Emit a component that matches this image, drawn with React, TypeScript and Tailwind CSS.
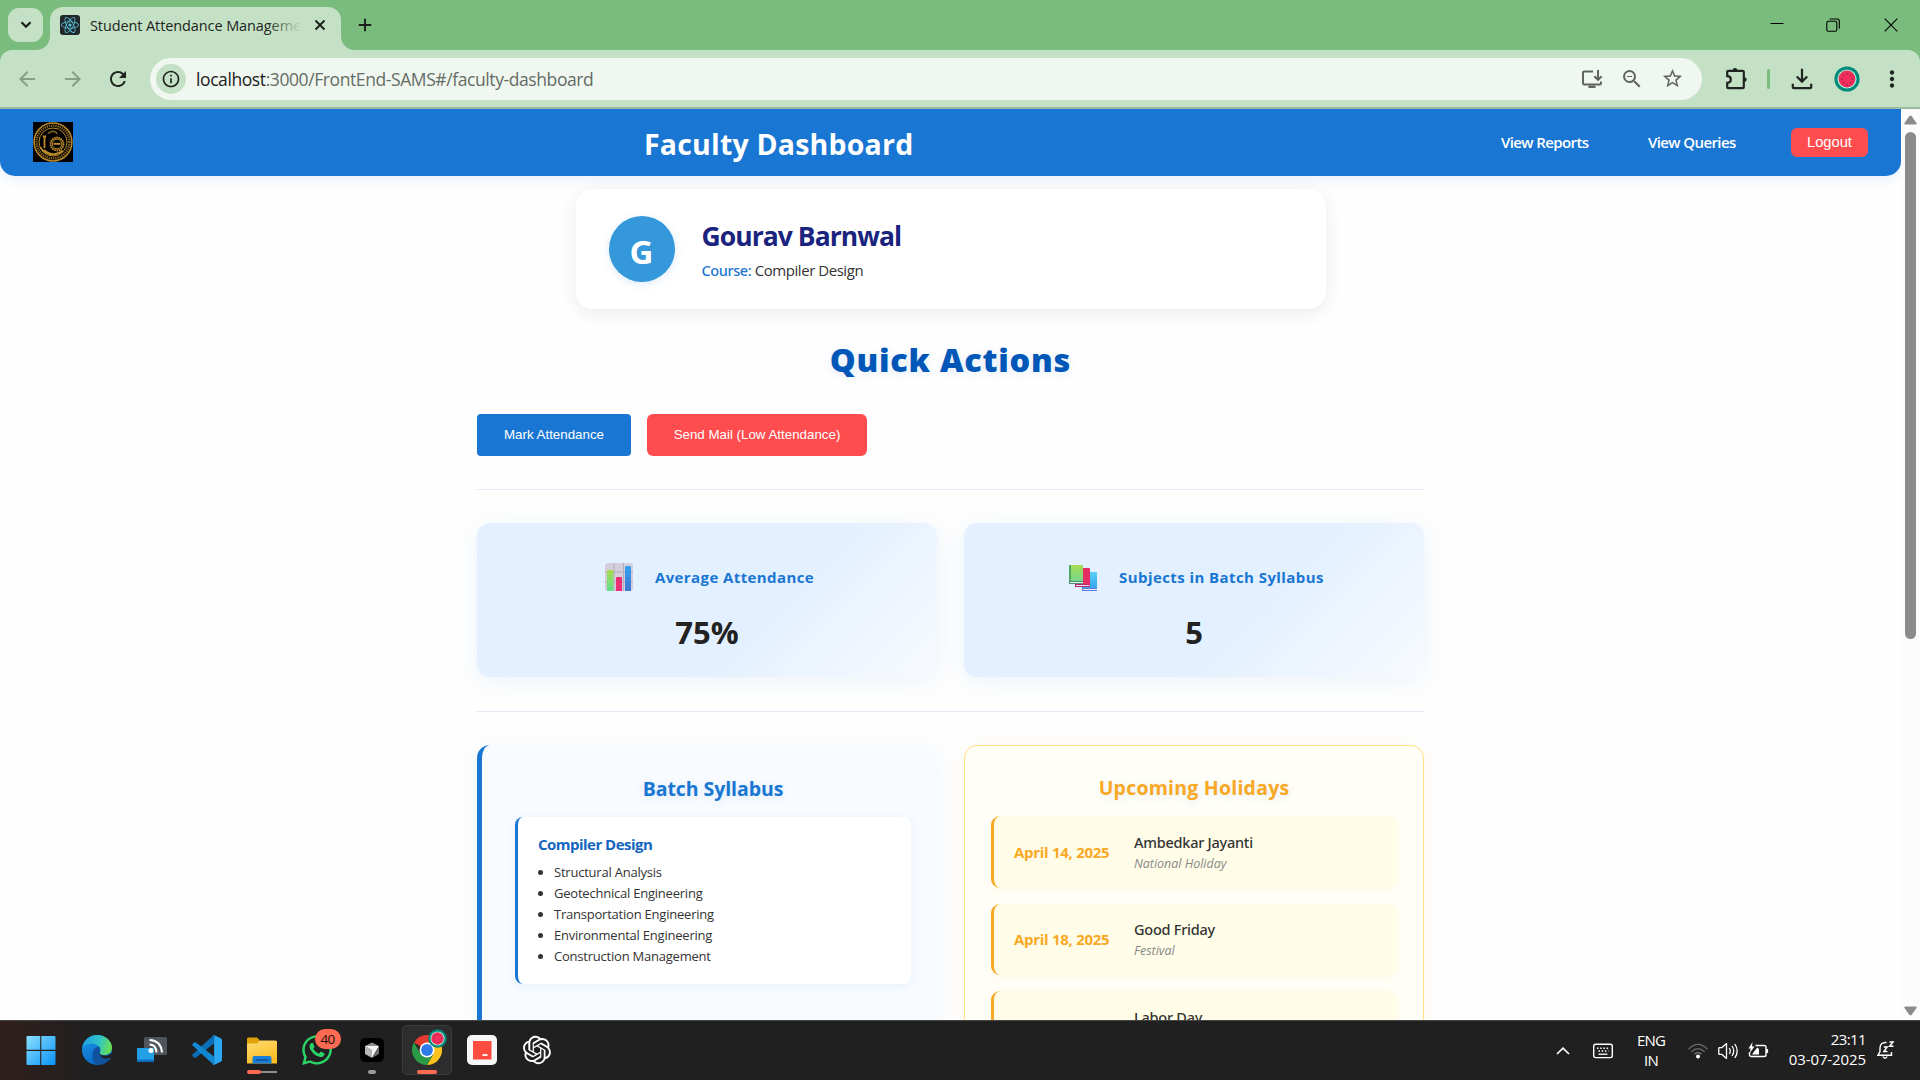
import React from "react";
import { FaReact, FaWhatsapp } from "react-icons/fa";
import {
  MdArrowBack,
  MdArrowForward,
  MdRefresh,
  MdInfoOutline,
  MdZoomOut,
  MdStarOutline,
  MdMoreVert,
} from "react-icons/md";
import { RiOpenaiFill } from "react-icons/ri";

/* ---------- Browser chrome ---------- */

function Melon({ className }: { className: string }) {
  return (
    <svg viewBox="0 0 26 26" className={className}>
      <circle cx="13" cy="13" r="12.6" fill="#00897b" />
      <circle cx="13" cy="13" r="9.6" fill="#a7f0d8" />
      <circle cx="13" cy="13" r="8.4" fill="#f22e5c" />
      <g fill="#5c1330">
        <circle cx="13" cy="7.5" r=".6" />
        <circle cx="13" cy="18.5" r=".6" />
        <circle cx="7.5" cy="13" r=".6" />
        <circle cx="18.5" cy="13" r=".6" />
        <circle cx="9.3" cy="9.3" r=".6" />
        <circle cx="16.7" cy="9.3" r=".6" />
        <circle cx="9.3" cy="16.7" r=".6" />
        <circle cx="16.7" cy="16.7" r=".6" />
      </g>
    </svg>
  );
}

function TabStrip() {
  return (
    <div className="flex h-[50px] items-end bg-[#7abc7d]">
      <div className="mb-2 ml-2 flex h-[34px] w-[35px] shrink-0 items-center justify-center rounded-[11px] bg-[#c5e1c5]">
        <svg viewBox="0 0 12 8" className="h-[8px] w-[12px]" fill="none" stroke="#1b1f1b" strokeWidth="2.2">
          <path d="M1.5 1.2 6 5.8l4.500-4.600" />
        </svg>
      </div>
      <svg viewBox="0 0 14 14" className="-ml-[7px] h-[14px] w-[14px] shrink-0" fill="#c5e1c5">
        <path d="M14 0v14H0C8 14 14 8 14 0Z" />
      </svg>
      <div className="flex h-[43px] w-[291px] shrink-0 items-center rounded-t-[13px] bg-[#c5e1c5] pl-[10px]">
        <div className="mt-[-8px] flex h-5 w-5 items-center justify-center rounded-[3px] bg-[#22272b]">
          <FaReact className="h-[18px] w-[18px] text-[#58c4dc]" />
        </div>
        <div className="relative mt-[-6px] ml-[10px] h-[24px] w-[211px] overflow-hidden text-[14.5px] leading-6 tracking-[-0.1px] whitespace-nowrap text-[#1d241d]">
          Student Attendance Management
          <div className="absolute top-0 right-0 h-full w-[34px] bg-linear-to-r from-[#c5e1c500] to-[#c5e1c5]" />
        </div>
        <svg viewBox="0 0 12 12" className="mt-[-7px] ml-[13px] h-3 w-3" stroke="#1b1f1b" strokeWidth="1.9">
          <path d="M1.500 1.500l9 9M10.500 1.500l-9 9" />
        </svg>
      </div>
      <svg viewBox="0 0 14 14" className="h-[14px] w-[14px] shrink-0" fill="#c5e1c5">
        <path d="M0 0v14h14C6 14 0 8 0 0Z" />
      </svg>
      <svg viewBox="0 0 14 14" className="mb-[18px] ml-[3px] h-[14px] w-[14px] shrink-0" stroke="#1b1f1b" strokeWidth="1.9">
        <path d="M7 .8v12.400M.8 7h12.400" />
      </svg>
      <div className="ml-auto flex h-full w-[154px] shrink-0 items-center pl-[4px] text-black">
        <svg viewBox="0 0 14 14" className="h-[14px] w-[14px]" fill="none" stroke="currentColor">
          <path d="M.5 5.500h13" />
        </svg>
        <svg viewBox="0 0 14 14" className="ml-[42px] h-[14px] w-[14px]" fill="none" stroke="currentColor" strokeWidth="1.100">
          <rect x=".8" y="3.200" width="10" height="10" rx="1.500" />
          <path d="M3.500 1h7.500q2.300 0 2.300 2.300v7.500" />
        </svg>
        <svg viewBox="0 0 14 14" className="ml-[44px] h-[14px] w-[14px]" fill="none" stroke="currentColor" strokeWidth="1.100">
          <path d="M.7.7l12.600 12.600M13.300.7.7 13.300" />
        </svg>
      </div>
    </div>
  );
}

function Toolbar() {
  return (
    <div className="h-[59px] bg-[#7abc7d]">
      <div className="flex h-full items-center rounded-t-[12px] border-b-2 border-[#9fb8a1] bg-[#c5e1c5] text-[#1f2420]">
        <MdArrowBack className="ml-[15px] h-6 w-6 text-[#84a085]" />
        <MdArrowForward className="ml-[22px] h-6 w-6 text-[#84a085]" />
        <MdRefresh className="ml-[21px] h-6 w-6" />
        <div className="ml-[20px] flex h-[42px] w-[1552px] items-center rounded-full bg-[#f0f7f0] pl-[6px] text-[#5f6460]">
          <div className="flex h-[30px] w-[30px] items-center justify-center rounded-full bg-[#c5e1c5]">
            <MdInfoOutline className="h-5 w-5 text-[#1f2420]" />
          </div>
          <div className="ml-[10px] h-6 w-[420px] text-[17.5px] leading-6 tracking-[-0.41px] whitespace-nowrap text-[#646c66]">
            <span className="text-[#1c211d]">localhost</span>:3000/FrontEnd-SAMS#/faculty-dashboard
          </div>
          <svg viewBox="0 0 22 18" className="ml-auto h-[18px] w-[22px]" fill="none" stroke="currentColor" strokeWidth="2">
            <path d="M12 1.500H3.200Q2 1.500 2 2.700v10.600q0 1.200 1.200 1.200h15.600q1.200 0 1.200-1.200V11.500" />
            <path d="M17 0v9.500M13.300 6.200 17 9.800l3.700-3.600" />
            <path d="M7.500 16.800h7" strokeWidth="2.400" />
          </svg>
          <MdZoomOut className="ml-[17px] h-[24px] w-[24px]" />
          <MdStarOutline className="ml-[17px] h-[23px] w-[23px]" />
          <div className="w-[18px]" />
        </div>
        <svg viewBox="0 0 24 24" className="ml-[22px] h-6 w-6" fill="none" stroke="currentColor" strokeWidth="2.200">
          <path d="M4.200 3.800h14.600q1 0 1 1v15.400q0 1-1 1H4.200q-1 0-1-1v-4.400c2.600 0 3.600-1.500 3.600-3.300S5.800 9.200 3.200 9.200V4.800q0-1 1-1Z" />
          <path d="M8.600 3.600a2.400 2.600 0 0 1 4.800 0ZM20 10.200a2.600 2.400 0 0 1 0 4.800Z" fill="currentColor" stroke="none" />
        </svg>
        <div className="ml-[19px] h-[20px] w-[3px] rounded-full bg-[#7abc7d]" />
        <svg viewBox="0 0 22 22" className="ml-[21px] h-[22px] w-[22px]" fill="none" stroke="currentColor" strokeWidth="2.200">
          <path d="M11 .8v12.400M5.800 8.500 11 13.600l5.200-5.100" />
          <path d="M1.800 15.800v3.400q0 1 1 1h16.400q1 0 1-1v-3.400" />
        </svg>
        <Melon className="ml-[21px] h-[26px] w-[26px]" />
        <MdMoreVert className="ml-[19px] h-[26px] w-[26px]" />
      </div>
    </div>
  );
}

/* ---------- Page content ---------- */

function Logo() {
  return (
    <svg viewBox="0 0 40 40" className="-mt-px h-10 w-10 bg-black" fill="none" stroke="#b98a2b">
      <circle cx="20" cy="20" r="18.900" strokeWidth="1.500" />
      <circle cx="20" cy="20" r="16.400" strokeWidth="2.400" strokeDasharray="1.300 .9" opacity=".75" />
      <circle cx="20" cy="20" r="14" strokeWidth="1" />
      <circle cx="24" cy="22" r="6.400" strokeWidth="2" strokeDasharray="1.600 .6" />
      <circle cx="24" cy="22" r="4.800" strokeWidth="1" />
      <path d="M20.500 21.800h7" strokeWidth="2" />
      <path d="M11.500 14v12M9.800 14.500h3.400" strokeWidth="1.800" />
      <path d="M7.500 25c3 8 15 10 22 3.500M11 28c5 5 13 5.500 18.500 1" strokeWidth="1.800" />
      <path d="M15 11.500q5-4.500 9.500 0" strokeWidth="2" opacity=".6" />
    </svg>
  );
}

function Header() {
  return (
    <header className="flex h-[67px] shrink-0 items-center rounded-b-[15px] bg-[#1976d2] pr-[33px] pl-[33px] text-white shadow-[0_2px_14px_rgba(25,118,210,0.12)]">
      <Logo />
      <h1 className="mt-[3px] ml-[571px] text-[28.5px] leading-10 font-bold tracking-[0.2px] whitespace-nowrap">
        Faculty Dashboard
      </h1>
      <nav className="mt-[-1px] ml-auto flex items-center text-[15px] leading-6 font-semibold tracking-[-0.6px] whitespace-nowrap">
        <a className="w-[147px]">View Reports</a>
        <a className="w-[143px]">View Queries</a>
      </nav>
      <button className="flex h-[29px] w-[77px] items-center justify-center rounded-[6px] bg-[#ff4d4f] font-['Liberation_Sans'] text-[14.7px]">
        Logout
      </button>
    </header>
  );
}

function ProfileCard() {
  return (
    <section className="mt-[13px] flex h-[120px] w-[750px] shrink-0 items-center self-center rounded-[17px] bg-white pl-[33px] shadow-[0_4px_18px_rgba(0,0,0,0.08)]">
      <div className="flex h-[66px] w-[66px] items-center justify-center rounded-full bg-[#3498db] pt-1 text-[33px] leading-none font-bold text-white shadow-[0_2px_8px_rgba(25,118,210,0.15)]">
        G
      </div>
      <div className="mt-[7px] ml-[27px] whitespace-nowrap">
        <h2 className="text-[26.500px] leading-[34px] font-bold tracking-[-0.95px] text-[#1a237e]">Gourav Barnwal</h2>
        <p className="text-[15px] leading-[34px] tracking-[-0.45px] text-[#333]">
          <span className="font-['Noto_Sans'] text-[14.5px] font-medium tracking-[-0.4px] text-[#1976d2]">Course:</span> Compiler Design
        </p>
      </div>
    </section>
  );
}

function ChartIcon() {
  return (
    <svg viewBox="0 0 28 28" className="h-7 w-7">
      <defs>
        <linearGradient id="cg" x1="0" y1="0" x2="0" y2="1">
          <stop offset="0" stopColor="#a8dc4e" />
          <stop offset="1" stopColor="#5fe08f" />
        </linearGradient>
        <linearGradient id="cb" x1="0" y1="0" x2="0" y2="1">
          <stop offset="0" stopColor="#35a2f4" />
          <stop offset="1" stopColor="#3f78cf" />
        </linearGradient>
      </defs>
      <rect width="28" height="28" rx="3" fill="#d5cfdd" />
      <path d="M9 0v28M18.500 0v28M0 9h28M0 19h28" stroke="#b3aabd" />
      <path d="M2 8q0-1 1-1h4.500q1 0 1 1v20H2Z" fill="url(#cg)" />
      <path d="M11 15q0-1 1-1h4q1 0 1 1v13h-6Z" fill="#ea2f74" />
      <path d="M20 4q0-1 1-1h4q1 0 1 1v24h-6Z" fill="url(#cb)" />
    </svg>
  );
}

function BooksIcon() {
  return (
    <svg viewBox="0 0 28 28" className="h-7 w-7">
      <defs>
        <linearGradient id="bg1" x1="0" y1="0" x2="0" y2="1">
          <stop offset="0" stopColor="#a6dd52" />
          <stop offset="1" stopColor="#6fd598" />
        </linearGradient>
        <linearGradient id="bg2" x1="0" y1="0" x2="0" y2="1">
          <stop offset="0" stopColor="#5ad0f6" />
          <stop offset="1" stopColor="#2f9df0" />
        </linearGradient>
      </defs>
      <rect x="13" y="9" width="15" height="19" rx="1" fill="url(#bg2)" />
      <path d="M13 25h15v3H13Z" fill="#5b7fdb" />
      <path d="M14 26.500h14" stroke="#e8e4f5" />
      <rect x="6" y="5" width="15" height="19" rx="1" fill="#e52e63" />
      <path d="M6 21h14v3H6Z" fill="#b02a6a" />
      <path d="M7 22.500h13" stroke="#f5e4f0" />
      <rect x="0" y="2" width="14" height="19" rx="1" fill="url(#bg1)" />
      <path d="M0 2h2v19H0Z" fill="#4ea860" />
      <path d="M0 18h14v3H0Z" fill="#4b8d72" />
      <path d="M1 19.500h13" stroke="#efeaf5" />
    </svg>
  );
}

function StatCard({ icon, label, value, labelClass }: { icon: React.ReactNode; label: string; value: string; labelClass: string }) {
  return (
    <div className="flex h-[154px] flex-col items-center rounded-[13px] bg-[linear-gradient(135deg,#e3f0ff_60%,#f8faff_100%)] pt-[39px] shadow-[0_4px_24px_rgba(25,118,210,0.08)]">
      <div className="ml-[5px] flex h-[29px] items-center gap-[22px]">
        {icon}
        <div className={"text-[15px] leading-6 font-bold whitespace-nowrap text-[#1976d2] " + labelClass}>{label}</div>
      </div>
      <div className="mt-[21px] text-[31px] leading-10 font-bold text-[#222]">{value}</div>
    </div>
  );
}

const topics = [
  "Structural Analysis",
  "Geotechnical Engineering",
  "Transportation Engineering",
  "Environmental Engineering",
  "Construction Management",
];

function Syllabus() {
  return (
    <section className="h-[400px] rounded-[13px] border-l-[5px] border-[#1976d2] bg-[#f8fbff] pr-[26px] pl-[33px] shadow-[0_4px_22px_rgba(25,118,210,0.06)]">
      <h3 className="mt-[28px] text-center text-[19.500px] leading-8 font-bold tracking-[-0.08px] text-[#1976d2] [text-shadow:0_2px_8px_rgba(25,118,210,0.12)]">
        Batch Syllabus
      </h3>
      <div className="mt-[12px] h-[167px] rounded-[8px] border-l-[3px] border-[#1976d2] bg-white pt-[15px] pl-[20px] shadow-[0_2px_8px_rgba(25,118,210,0.08)]">
        <h4 className="text-[15px] leading-6 font-bold tracking-[-0.52px] text-[#1565c0]">Compiler Design</h4>
        <ul className="mt-[6px]">
          {topics.map((t) => (
            <li key={t} className="flex h-[21px] items-center text-[13px] tracking-[-0.22px] text-[#333]">
              <span className="mr-[11px] h-[5px] w-[5px] rounded-full bg-[#333]" />
              {t}
            </li>
          ))}
        </ul>
      </div>
    </section>
  );
}

const holidays = [
  { date: "April 14, 2025", name: "Ambedkar Jayanti", kind: "National Holiday" },
  { date: "April 18, 2025", name: "Good Friday", kind: "Festival" },
  { date: "May 1, 2025", name: "Labor Day", kind: "National Holiday" },
];

function Holidays() {
  return (
    <section className="h-[400px] rounded-[13px] border border-[#ffe082] bg-[#fffef7] px-[26px] shadow-[0_4px_20px_rgba(249,168,37,0.08)]">
      <h3 className="mt-[26px] text-center text-[19.500px] leading-8 font-bold tracking-[0.22px] text-[#f9a825] [text-shadow:0_2px_8px_rgba(25,118,210,0.12)]">
        Upcoming Holidays
      </h3>
      <div className="mt-[12px] flex flex-col gap-4">
        {holidays.map((h) => (
          <div
            key={h.date}
            className="flex h-[71.500px] items-center rounded-[9px] border-l-[3px] border-[#f9a825] bg-[#fffde7] pl-[20px] whitespace-nowrap shadow-[0_2px_8px_rgba(249,168,37,0.07)]"
          >
            <div className="w-[120px] text-[15px] font-bold tracking-[-0.28px] text-[#f9a825]">{h.date}</div>
            <div className="mt-[2px]">
              <div className="font-['Noto_Sans'] text-[14.500px] leading-[21px] font-medium tracking-[-0.25px] text-[#333]">{h.name}</div>
              <div className="text-[12.500px] leading-[21px] tracking-[-0.02px] text-[#888] italic">{h.kind}</div>
            </div>
          </div>
        ))}
      </div>
    </section>
  );
}

function Page() {
  return (
    <div className="flex h-[911px] overflow-hidden bg-[#fefefe]">
      <div className="flex min-w-0 flex-1 flex-col">
        <Header />
        <ProfileCard />
        <main className="flex w-[947px] shrink-0 flex-col self-center">
          <h2 className="mt-[26px] h-[50px] text-center text-[32.500px] leading-[50px] font-extrabold tracking-[0.75px] text-[#0057b8] [text-shadow:0_2px_8px_rgba(25,118,210,0.12)]">
            Quick Actions
          </h2>
          <div className="mt-[29px] flex h-[42px] gap-4 font-['Liberation_Sans'] text-[13.33px] text-white">
            <button className="w-[154px] rounded-[4px] bg-[#1976d2]">Mark Attendance</button>
            <button className="w-[220px] rounded-[6px] bg-[#ff4d4f]">Send Mail (Low Attendance)</button>
          </div>
          <hr className="mt-[33px] border-[#e3e8f4]" />
          <div className="mt-[33px] grid grid-cols-2 gap-[27px]">
            <StatCard icon={<ChartIcon />} label="Average Attendance" value="75%" labelClass="tracking-[0.4px]" />
            <StatCard icon={<BooksIcon />} label="Subjects in Batch Syllabus" value="5" labelClass="tracking-[0.42px]" />
          </div>
          <hr className="mt-[34px] border-[#e3e8f4]" />
          <div className="mt-[33px] grid grid-cols-2 gap-[27px]">
            <Syllabus />
            <Holidays />
          </div>
        </main>
      </div>
      <div className="flex h-full w-[19px] flex-col items-center bg-[#fcfcfc] text-[#8b8b8b]">
        <svg viewBox="0 0 13 10" className="mt-[6px] h-[10px] w-[13px]" fill="currentColor">
          <path d="M5.300 1.200q1.200-1.600 2.400 0L12.500 8q.6 1.500-.8 1.500H1.300Q-.1 9.500.5 8Z" />
        </svg>
        <div className="mt-[7px] h-[507px] w-[11px] rounded-full bg-[#8b8b8b]" />
        <svg viewBox="0 0 13 10" className="mt-auto mb-[4px] h-[10px] w-[13px] rotate-180" fill="currentColor">
          <path d="M5.300 1.200q1.200-1.600 2.400 0L12.500 8q.6 1.500-.8 1.500H1.300Q-.1 9.500.5 8Z" />
        </svg>
      </div>
    </div>
  );
}

/* ---------- Taskbar ---------- */

function AppCell({ children, indicator }: { children: React.ReactNode; indicator?: React.ReactNode }) {
  return (
    <div className="flex h-full w-[55px] flex-col items-center pt-[14px]">
      <div className="relative h-[30px] w-[30px]">{children}</div>
      <div className="mt-[5px] flex h-1">{indicator}</div>
    </div>
  );
}

function TaskApps() {
  return (
    <div className="flex h-full pl-[14px]">
      <AppCell>
        <svg viewBox="0 0 30 30" className="-ml-px h-[30px] w-[30px]">
          <defs>
            <linearGradient id="win" x1="0" y1="0" x2="1" y2="1">
              <stop offset="0" stopColor="#8be0ff" />
              <stop offset="1" stopColor="#0a92f5" />
            </linearGradient>
          </defs>
          <path d="M.5 2q0-1 1-1h12.700v13.800H.5ZM15.300 1H28.500q1 0 1 1v12.800H15.300ZM.5 15.900h13.700v14H1.500q-1 0-1-1ZM15.300 15.900h14.200v13q0 1-1 1H15.300Z" fill="url(#win)" />
        </svg>
      </AppCell>
      <AppCell>
        <svg viewBox="0 0 30 30" className="h-[30px] w-[30px]">
          <defs>
            <linearGradient id="e1" x1="0" y1=".3" x2="1" y2=".5">
              <stop offset="0" stopColor="#1e9fe4" />
              <stop offset=".55" stopColor="#2fc3c9" />
              <stop offset="1" stopColor="#6be04c" />
            </linearGradient>
            <linearGradient id="e2" x1="0" y1="0" x2=".6" y2="1">
              <stop offset="0" stopColor="#1a9ae8" />
              <stop offset="1" stopColor="#0b62c4" />
            </linearGradient>
          </defs>
          <circle cx="15" cy="15" r="15" fill="url(#e2)" />
          <path d="M.3 13.500C1 5.500 7.500 0 15 0c8.500 0 15 6 15 12.500 0 5-3.800 7.700-7.800 7.700-3.500 0-5.200-1.300-4.600-2.400 1-1.500 1.100-2.900.4-4.500C15.500 7.500 4 6.500.3 13.500Z" fill="url(#e1)" />
          <path d="M10.500 20c0-5.500 3-8 6.500-8.500 1.300 2 1.500 4.500.6 6.300-.6 1.100 1.200 2.400 4.600 2.400 3 0 5-.9 6.500-2.200l1 3.500C27 27 21.500 30 17 30c-4 0-6.500-4.500-6.500-10Z" fill="#11529f" />
          <path d="M17.500 17.500c.3 2.400 2.500 3.400 5.500 3.300 3 0 5.600-1.200 8-4.300v5.700l-2.300.300c-4.500 2.500-11.700.4-11.200-5Z" fill="#202020" />
        </svg>
      </AppCell>
      <AppCell>
        <svg viewBox="0 0 30 30" className="h-[30px] w-[30px]">
          <rect x="7" y="2" width="23" height="18" rx="1.500" fill="#50555b" />
          <path d="M1 13h16v14H1.500Q0 27 0 25.500V14q0-1 1-1Z" fill="#22a0e6" />
          <path d="M0 24.500h17V27H1.500Q0 27 0 25.500Z" fill="#0d6fc0" />
          <circle cx="14" cy="15.500" r="2.500" fill="#fff" />
          <path d="M12.500 9.500q6.500 0 7 8M12.500 5q11.500.5 12.500 12.500" fill="none" stroke="#fff" strokeWidth="2" />
        </svg>
      </AppCell>
      <AppCell>
        <svg viewBox="0 0 30 30" className="h-[30px] w-[30px]">
          <path d="M.6 19.500 21.800 0 22 8.500 4 22.500q-1 .7-2 0L.5 21q-.7-.8.1-1.500Z" fill="#0a6fb8" />
          <path d="M.6 10.500 21.800 30 22 21.500 4 7.500q-1-.7-2 0L.5 9q-.7.800.1 1.500Z" fill="#1187d2" />
          <path d="M21.800.1 28.700 3.300q1.300.6 1.300 2v19.400q0 1.400-1.300 2L21.800 30q-1 .2-1.700-.6 1.900 1 2-.9V1.500q-.1-1.900-2-.9.700-.7 1.700-.5Z" fill="#29a7f2" />
        </svg>
      </AppCell>
      <AppCell
        indicator={
          <>
            <div className="h-1 w-[14px] rounded-full bg-[#ff6b52]" />
            <div className="mt-px h-[2px] w-4 bg-[#8c8c8c]" />
          </>
        }
      >
        <svg viewBox="0 0 30 30" className="h-[30px] w-[30px]">
          <defs>
            <linearGradient id="fo" x1="0" y1="0" x2=".5" y2="1">
              <stop offset="0" stopColor="#ffdc73" />
              <stop offset="1" stopColor="#fbbd22" />
            </linearGradient>
          </defs>
          <path d="M0 4q0-1.500 1.500-1.500h8.500L13 5.500V9H0Z" fill="#e0a208" />
          <path d="M0 8.500h10l3-3h15.500q1.500 0 1.500 1.500v21.500H0Z" fill="url(#fo)" />
          <path d="M5.500 28.500V23q0-2 2-2h15q2 0 2 2v5.500Z" fill="#1a7fd6" />
          <path d="M8.500 25h13" stroke="#0b4f94" strokeWidth="1.500" />
        </svg>
      </AppCell>
      <AppCell>
        <FaWhatsapp className="-mt-[2px] -ml-[2px] h-[34px] w-[34px] text-[#2bd366]" />
        <div className="absolute top-[-6px] left-[13px] flex h-5 w-[26px] items-center justify-center rounded-full bg-[#ff6b52] text-[13.500px] tracking-[-0.7px] text-[#201010]">
          40
        </div>
      </AppCell>
      <AppCell indicator={<div className="h-1 w-2 rounded-full bg-[#9a9a9a]" />}>
        <svg viewBox="0 0 30 30" className="h-[30px] w-[30px]">
          <rect x="3" y="3" width="24" height="24" rx="5" fill="#000" />
          <path d="M15 7.500 22 11 15 15 8 11Z" fill="#8c8c8c" />
          <path d="M8 11l7 4v8l-7-4Z" fill="#b5b5b5" />
          <path d="M22 11l-7 12v-8L8 11Z" fill="#f4f4f4" />
          <path d="M22 11v8l-7 4Z" fill="#6e6e6e" />
        </svg>
      </AppCell>
      <div className="flex h-full w-[55px] flex-col items-center pt-1">
        <div className="flex h-[50px] w-[50px] flex-col items-center rounded-[5px] border border-[#3a3a3a] bg-[#2d2d2d] pt-[9px]">
          <div className="relative h-[30px] w-[30px]">
            <svg viewBox="0 0 30 30" className="h-[30px] w-[30px]">
              <path d="M15 15 2 7.500A15 15 0 0 1 28 7.500L15 8Z" fill="#e33b2e" />
              <path d="M15 15 28 7.500A15 15 0 0 1 15 30L21.500 18.700 15 7.500H28Z" fill="#fcc31e" />
              <path d="M15 15 21.300 18.900 15 30A15 15 0 0 1 2 7.500L8.500 18.700Z" fill="#2b9a47" />
              <circle cx="15" cy="15" r="7.500" fill="#fff" />
              <circle cx="15" cy="15" r="5.900" fill="#2f7bea" />
            </svg>
            <Melon className="absolute top-[-6px] left-[16px] h-[19px] w-[19px]" />
          </div>
          <div className="mt-[5px] h-1 w-5 shrink-0 rounded-full bg-[#ff6b52]" />
        </div>
      </div>
      <AppCell>
        <svg viewBox="0 0 30 30" className="h-[30px] w-[30px]">
          <rect width="30" height="30" rx="5" fill="#f7f7f7" />
          <rect x="6" y="6" width="18.500" height="18.500" fill="#ff4c40" />
          <path d="M15.500 20h5" stroke="#fff" strokeWidth="1.800" />
        </svg>
      </AppCell>
      <AppCell>
        <RiOpenaiFill className="-mt-[2px] -ml-[2px] h-[34px] w-[34px] text-white" />
      </AppCell>
    </div>
  );
}

function Tray() {
  return (
    <div className="ml-auto flex h-full items-center text-[15px] leading-5 text-white">
      <svg viewBox="0 0 14 8" className="h-2 w-[14px]" fill="none" stroke="#fff" strokeWidth="1.700">
        <path d="M1 7l6-5.800L13 7" />
      </svg>
      <svg viewBox="0 0 20 16" className="ml-[23px] h-4 w-5" fill="none" stroke="#fff" strokeWidth="1.400">
        <rect x=".7" y="1.200" width="18.600" height="13.400" rx="1.800" />
        <path d="M4 5.200h12.500" strokeDasharray="1.500 1.700" strokeWidth="1.500" />
        <path d="M5.500 8h10" strokeDasharray="1.500 1.700" strokeWidth="1.500" />
        <path d="M5.500 11.200h9" strokeWidth="1.300" />
      </svg>
      <div className="mt-[-2px] ml-[17px] w-[42px] text-center tracking-[-0.8px]">
        <div>ENG</div>
        <div>IN</div>
      </div>
      <svg viewBox="0 0 20 16" className="ml-[16px] h-4 w-5" fill="none" stroke="#6c6c6c" strokeWidth="1.300">
        <path d="M.6 6.200Q10-3.500 19.400 6.200M3.500 8.800q6.500-6.300 13 0M6.300 11.200q3.700-3.500 7.400 0" />
        <circle cx="10" cy="13.500" r="2" fill="#fff" stroke="none" />
      </svg>
      <svg viewBox="0 0 21 18" className="ml-[10px] h-[18px] w-[21px]" fill="none" stroke="#fff" strokeWidth="1.300">
        <path d="M.8 6.300q0-.7.7-.7H4l4.500-4v14.800l-4.500-4H1.500q-.7 0-.7-.7Z" strokeLinejoin="round" />
        <path d="M11.300 6q2 3 0 6M14 4q3.500 5 0 10M16.800 2q4.800 7 0 14" />
      </svg>
      <svg viewBox="0 0 21 18" className="ml-[9px] h-[18px] w-[21px]" fill="none" stroke="#fff" strokeWidth="1.400">
        <path d="M7.500 3.500h8.700q1.800 0 1.800 1.800v7.400q0 1.800-1.800 1.800H3.300q-1.800 0-1.800-1.800V10" />
        <path d="M19 7v4" strokeWidth="2.200" />
        <path d="M9.300 5.500 11 7v5.500H4L6.500 9Z" fill="#fff" stroke="none" />
        <path d="M4.500 0 .5 6.500h2.200L1.800 11 6.500 4.500H4Z" fill="#fff" stroke="none" />
      </svg>
      <div className="mt-[-3px] ml-[15px] w-[82px] text-right whitespace-nowrap">
        <div className="tracking-[-0.6px]">23:11</div>
        <div className="tracking-[-0.1px]">03-07-2025</div>
      </div>
      <svg viewBox="0 0 18 19" className="mr-[25px] ml-[11px] h-[19px] w-[18px]" fill="none" stroke="#fff" strokeWidth="1.400">
        <path d="M9.500 1.500C5 1 3 3.800 3 7v3.500L1 14.200h13.500V11" />
        <path d="M5.800 15.500q2.200 3.500 4.400 0" />
        <path d="M6.800 6h3.400l-3.400 4.500h3.600" />
        <path d="M12.500 1h3.600l-3.600 4.300h4" />
      </svg>
    </div>
  );
}

export default function App() {
  return (
    <div className="h-[1080px] w-[1920px] overflow-hidden bg-white font-['Open_Sans',sans-serif]">
      <TabStrip />
      <Toolbar />
      <Page />
      <div className="flex h-[60px] border-t border-[#454545] bg-[linear-gradient(90deg,#301f1c_0px,#202020_90px)]">
        <TaskApps />
        <Tray />
      </div>
    </div>
  );
}
